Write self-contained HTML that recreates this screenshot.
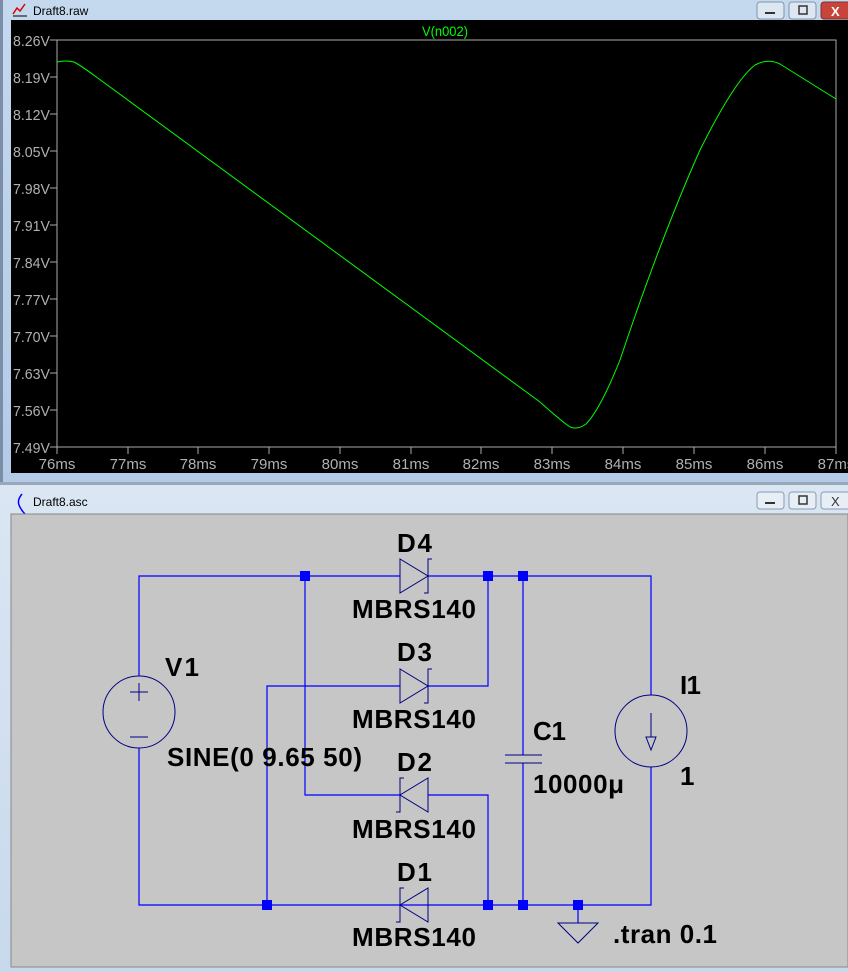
<!DOCTYPE html>
<html><head><style>
body{margin:0;width:848px;height:972px;overflow:hidden;background:#c9dbee;font-family:"Liberation Sans",sans-serif}
svg{position:absolute;left:0;top:0}
</style></head><body>
<svg width="848" height="972" viewBox="0 0 848 972" xmlns="http://www.w3.org/2000/svg">
<defs>
<linearGradient id="tb" x1="0" y1="0" x2="0" y2="1"><stop offset="0" stop-color="#c4d8ee"/><stop offset="1" stop-color="#b3cbe6"/></linearGradient>
<linearGradient id="tb2" x1="0" y1="0" x2="0" y2="1"><stop offset="0" stop-color="#dbe6f3"/><stop offset="1" stop-color="#c8d9ec"/></linearGradient>
</defs>
<rect x="0" y="0" width="848" height="482" fill="url(#tb)"/>
<rect x="0" y="0" width="3" height="482" fill="#7a8ea8"/>
<text x="33" y="15" font-size="12" fill="#000">Draft8.raw</text>
<path d="M13 14 L17 8 L20 11 L25 4" stroke="#d00" stroke-width="1.5" fill="none"/><path d="M13 16 H27" stroke="#000"/>
<rect x="757" y="2" width="27" height="17" rx="3" fill="#dde7f2" stroke="#7f93ad"/><rect x="765" y="12" width="10" height="2" fill="#333"/>
<rect x="789" y="2" width="27" height="17" rx="3" fill="#dde7f2" stroke="#7f93ad"/><rect x="799" y="6" width="8" height="8" fill="none" stroke="#333" stroke-width="1.5"/>
<rect x="821" y="2" width="30" height="17" rx="3" fill="#c7443a" stroke="#7f3030"/><text x="831" y="16" font-size="13" font-weight="bold" fill="#fff">X</text>
<rect x="11" y="20" width="837" height="453" fill="#000"/>
<text x="445" y="36" font-size="14" fill="#00ff00" text-anchor="middle" textLength="46" lengthAdjust="spacingAndGlyphs">V(n002)</text>
<rect x="57" y="40" width="779" height="407" fill="none" stroke="#aaa" stroke-width="1"/>
<g font-size="15" fill="#b0b0b0">
<text x="13" y="46" textLength="37" lengthAdjust="spacingAndGlyphs">8.26V</text><text x="13" y="83" textLength="37" lengthAdjust="spacingAndGlyphs">8.19V</text><text x="13" y="120" textLength="37" lengthAdjust="spacingAndGlyphs">8.12V</text><text x="13" y="157" textLength="37" lengthAdjust="spacingAndGlyphs">8.05V</text><text x="13" y="194" textLength="37" lengthAdjust="spacingAndGlyphs">7.98V</text><text x="13" y="231" textLength="37" lengthAdjust="spacingAndGlyphs">7.91V</text><text x="13" y="268" textLength="37" lengthAdjust="spacingAndGlyphs">7.84V</text><text x="13" y="305" textLength="37" lengthAdjust="spacingAndGlyphs">7.77V</text><text x="13" y="342" textLength="37" lengthAdjust="spacingAndGlyphs">7.70V</text><text x="13" y="379" textLength="37" lengthAdjust="spacingAndGlyphs">7.63V</text><text x="13" y="416" textLength="37" lengthAdjust="spacingAndGlyphs">7.56V</text><text x="13" y="453" textLength="37" lengthAdjust="spacingAndGlyphs">7.49V</text>
</g>
<g stroke="#aaa"><path d="M50 40H57M50 77H57M50 114H57M50 151H57M50 188H57M50 225H57M50 262H57M50 299H57M50 336H57M50 373H57M50 410H57M50 447H57"/>
<path d="M57 447V454M128 447V454M198 447V454M269 447V454M340 447V454M411 447V454M481 447V454M552 447V454M623 447V454M694 447V454M765 447V454M836 447V454"/></g>
<g font-size="15" fill="#b0b0b0" text-anchor="middle">
<text x="57" y="469">76ms</text><text x="128" y="469">77ms</text><text x="198" y="469">78ms</text><text x="269" y="469">79ms</text><text x="340" y="469">80ms</text><text x="411" y="469">81ms</text><text x="481" y="469">82ms</text><text x="552" y="469">83ms</text><text x="623" y="469">84ms</text><text x="694" y="469">85ms</text><text x="765" y="469">86ms</text><text x="836" y="469">87ms</text>
</g>
<path d="M57 62 Q66 60 74 62 Q80 65 95 76 L540 402 Q560 420 570 427 Q578 430 586 424 Q600 410 620 360 Q660 240 700 150 Q735 80 755 65 Q768 58 780 64 L836 99" stroke="#00ff00" stroke-width="1" fill="none"/>
<rect x="0" y="482" width="848" height="490" fill="url(#tb2)"/>
<rect x="0" y="482" width="848" height="3" fill="#9aa9b9"/>
<text x="33" y="506" font-size="12" fill="#000">Draft8.asc</text>
<path d="M22 494 Q17 500 19 505 Q21 510 25 514" stroke="#0000ff" fill="none" stroke-width="1.5"/>
<rect x="757" y="492" width="27" height="17" rx="3" fill="#e8eef5" stroke="#8a9bb0"/><rect x="765" y="502" width="10" height="2" fill="#333"/>
<rect x="789" y="492" width="27" height="17" rx="3" fill="#e8eef5" stroke="#8a9bb0"/><rect x="799" y="496" width="8" height="8" fill="none" stroke="#333" stroke-width="1.5"/>
<rect x="821" y="492" width="30" height="17" rx="3" fill="#e8eef5" stroke="#8a9bb0"/><text x="831" y="506" font-size="13" fill="#333">X</text>
<rect x="11" y="514" width="837" height="453" fill="#c6c6c6" stroke="#888"/>
<g stroke="#0000ff" stroke-width="1.2" fill="none">
<path d="M139 676V576H400M428 576H651V695M651 767V905H139V748"/>
<path d="M305 576V795H400M428 795H488V905"/>
<path d="M488 576V686H428M400 686H267V905"/>
<path d="M523 576V755M523 763V905M578 905V923"/>
</g>
<g fill="#0000ff"><rect x="300" y="571" width="10" height="10"/><rect x="483" y="571" width="10" height="10"/><rect x="518" y="571" width="10" height="10"/><rect x="262" y="900" width="10" height="10"/><rect x="483" y="900" width="10" height="10"/><rect x="518" y="900" width="10" height="10"/><rect x="573" y="900" width="10" height="10"/></g>
<g stroke="#000080" stroke-width="1" fill="none">
<circle cx="139" cy="712" r="36"/><path d="M130 692H148M139 683V701M130 737H148"/>
<circle cx="651" cy="731" r="36"/><path d="M651 713V737M646 737H656L651 750Z"/>
<path d="M505 755H542M505 763H542"/>
<path d="M558 923H598L578 943Z"/>
<path d="M400 559V593L428 576Z M432 559H428V593H424"/>
<path d="M400 669V703L428 686Z M432 669H428V703H424"/>
<path d="M428 778V812L400 795Z M404 778H400V812H396"/>
<path d="M428 888V922L400 905Z M404 888H400V922H396"/>
</g>
<g font-size="26" font-weight="bold" fill="#000" lengthAdjust="spacingAndGlyphs">
<text x="397" y="552" textLength="35">D4</text><text x="352" y="618" textLength="124">MBRS140</text>
<text x="397" y="661" textLength="35">D3</text><text x="352" y="728" textLength="124">MBRS140</text>
<text x="397" y="771" textLength="35">D2</text><text x="352" y="838" textLength="124">MBRS140</text>
<text x="397" y="881" textLength="35">D1</text><text x="352" y="946" textLength="124">MBRS140</text>
<text x="165" y="676" textLength="34">V1</text>
<text x="533" y="740" textLength="33">C1</text><text x="533" y="793" textLength="91">10000μ</text>
<text x="680" y="694" textLength="21">I1</text><text x="680" y="785">1</text>
<text x="613" y="943" textLength="104">.tran 0.1</text>
<text x="167" y="766" textLength="195">SINE(0 9.65 50)</text>
</g>
</svg>
</body></html>
